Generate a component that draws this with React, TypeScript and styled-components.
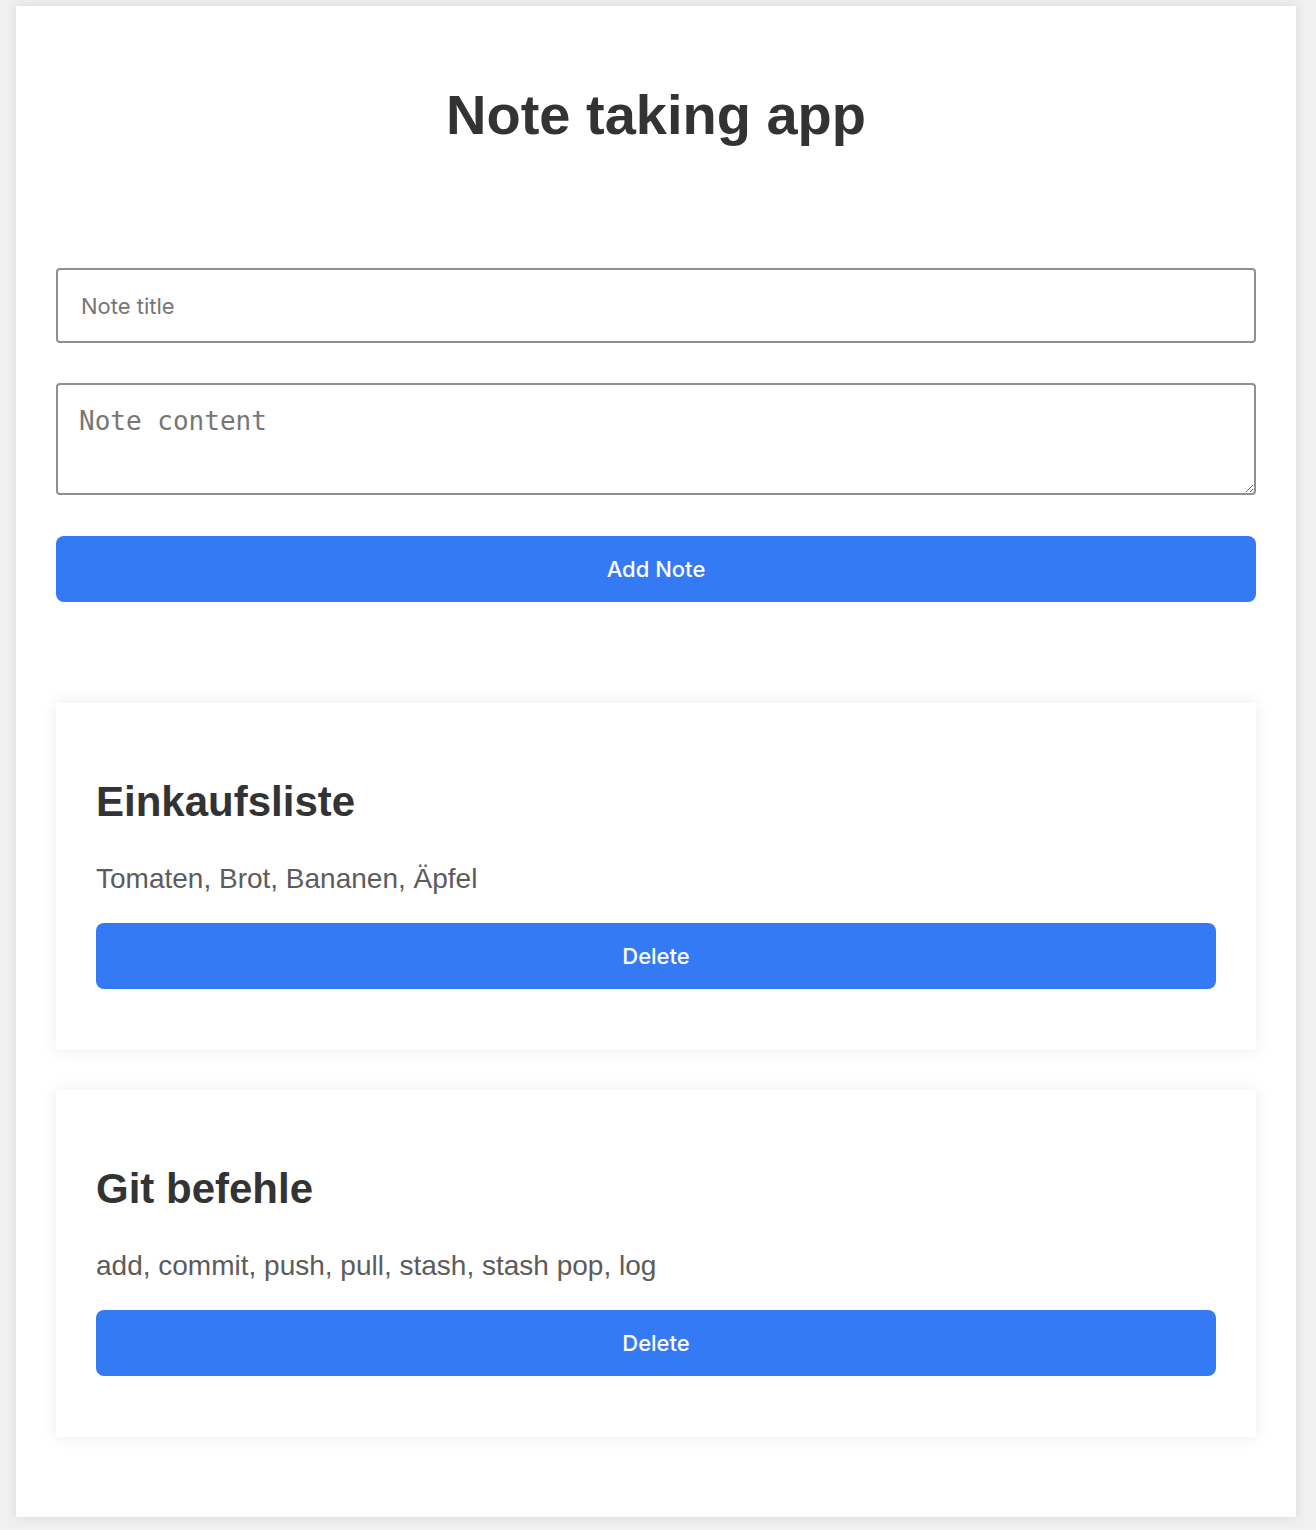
import { useState } from 'react';
import styled, { createGlobalStyle } from 'styled-components';

const GlobalStyle = createGlobalStyle`
	html, body {
		margin: 0;
		padding: 0;
		background: #f0f0f0;
	}
	body {
		font-family: 'Liberation Sans', Arial, sans-serif;
	}
	* {
		box-sizing: border-box;
	}
`;

const Page = styled.div`
	padding: 6px 20px 14px 16px;
`;

const Container = styled.main`
	width: 1280px;
	padding: 40px;
	background: #fff;
	box-shadow: 0 0 10px rgba(0, 0, 0, 0.1);
`;

const Title = styled.h1`
	margin: 36px 0 121px;
	font-size: 56px;
	font-weight: bold;
	text-align: center;
	color: #333;
`;

const Form = styled.form`
	display: flex;
	flex-direction: column;
	margin-bottom: 101px;
`;

const TitleInput = styled.input`
	height: 75px;
	margin: 0 0 40px;
	padding: 0 23px;
	border: 2px solid #8f8f98;
	border-radius: 4px;
	font-family: Inter, 'Noto Sans', sans-serif;
	font-size: 22px;
	color: #333;
	outline: none;

	&::placeholder {
		color: #767676;
	}
`;

const ContentInput = styled.textarea`
	height: 112px;
	margin: 0 0 41px;
	padding: 21px 21px;
	border: 2px solid #8f8f98;
	border-radius: 4px;
	font-family: 'DejaVu Sans Mono', 'Liberation Mono', monospace;
	font-size: 26px;
	color: #333;
	outline: none;

	&::placeholder {
		color: #767676;
	}
`;

const Button = styled.button`
	display: block;
	width: 100%;
	height: 66px;
	border: none;
	border-radius: 8px;
	background: #357af5;
	color: #fff;
	font-family: Inter, 'Noto Sans', sans-serif;
	font-size: 22px;
	font-weight: 500;
	cursor: pointer;
`;

const NoteList = styled.section`
	display: flex;
	flex-direction: column;
	gap: 40px;
	margin-bottom: 40px;
`;

const NoteCard = styled.article`
	padding: 40px 40px 61px;
	background: #fff;
	box-shadow: 0 0 15px rgba(0, 0, 0, 0.08);
`;

const NoteTitle = styled.h2`
	margin: 35px 0 37px;
	font-size: 42px;
	font-weight: bold;
	color: #333;
`;

const NoteText = styled.p`
	margin: 0 0 28px;
	font-size: 28px;
	color: #5c5c5c;
`;

type Note = {
	id: number;
	title: string;
	content: string;
};

const initialNotes: Note[] = [
	{ id: 1, title: 'Einkaufsliste', content: 'Tomaten, Brot, Bananen, Äpfel' },
	{ id: 2, title: 'Git befehle', content: 'add, commit, push, pull, stash, stash pop, log' },
];

const App = () => {
	const [notes, setNotes] = useState<Note[]>(initialNotes);
	const [title, setTitle] = useState('');
	const [content, setContent] = useState('');

	const addNote = (e: React.FormEvent) => {
		e.preventDefault();
		if (!title.trim()) return;
		setNotes([...notes, { id: Date.now(), title, content }]);
		setTitle('');
		setContent('');
	};

	return (
		<Page>
			<GlobalStyle />
			<Container>
				<Title>Note taking app</Title>
				<Form onSubmit={addNote}>
					<TitleInput
						placeholder="Note title"
						value={title}
						onChange={(e) => setTitle(e.target.value)}
					/>
					<ContentInput
						placeholder="Note content"
						value={content}
						onChange={(e) => setContent(e.target.value)}
					/>
					<Button type="submit">Add Note</Button>
				</Form>
				<NoteList>
					{notes.map((note) => (
						<NoteCard key={note.id}>
							<NoteTitle>{note.title}</NoteTitle>
							<NoteText>{note.content}</NoteText>
							<Button onClick={() => setNotes(notes.filter((n) => n.id !== note.id))}>
								Delete
							</Button>
						</NoteCard>
					))}
				</NoteList>
			</Container>
		</Page>
	);
};

export default App;
